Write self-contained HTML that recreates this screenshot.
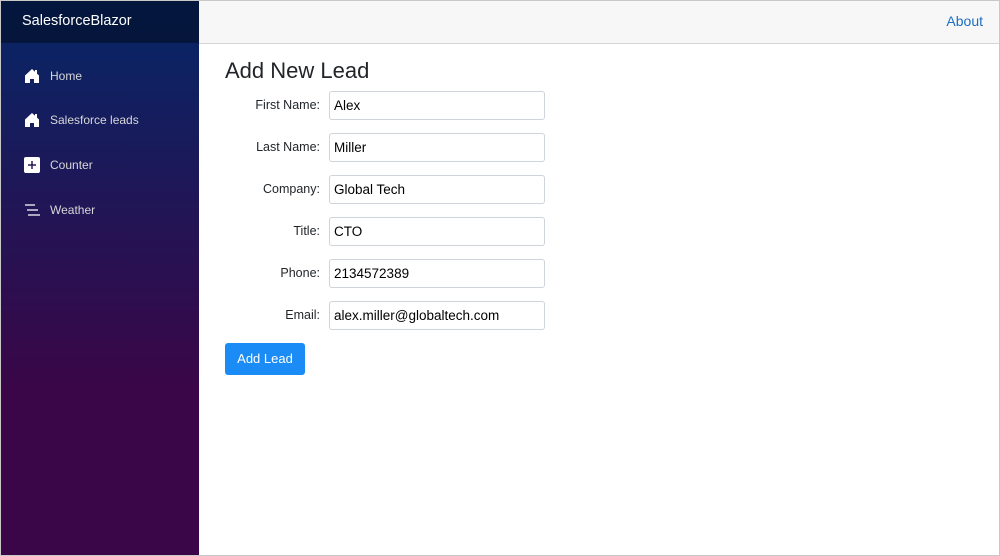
<!DOCTYPE html>
<html><head><style>
*{box-sizing:border-box;margin:0;padding:0}
body{width:1000px;height:556px;overflow:hidden;font-family:"Liberation Sans",Arial,sans-serif;background:#fff;position:relative}
.frame{position:absolute;inset:0;border:1px solid #c8c8c8;pointer-events:none;z-index:5}
.side{position:absolute;left:0;top:0;width:199px;height:556px;background:linear-gradient(180deg,#052767 0%,#3a0647 70%)}
.brand{height:43px;background:rgba(0,0,0,0.4);color:#fff;font-size:14.5px;line-height:43px;padding-left:22px}
.nav{position:absolute;left:24px;color:#d7d7d7;font-size:12px;display:flex;align-items:center}
.nav svg{margin-right:10px}
.top{position:absolute;left:199px;top:0;right:0;height:44px;background:#f7f7f7;border-bottom:1px solid #d6d5d5}
.top a{position:absolute;right:17px;top:13px;color:#1b6ec2;font-size:14px;text-decoration:none}
h1{position:absolute;left:225px;top:58px;font-size:22px;font-weight:normal;color:#212529}
.row{position:absolute;left:200px;width:400px;height:29px}
.row label{position:absolute;right:280px;top:7px;font-size:12.5px;color:#212529}
.row .in{position:absolute;left:129px;top:0;width:216px;height:29px;border:1px solid #ced4da;border-radius:3px;font-size:13.5px;padding:6px 0 0 4px;color:#000}
.btn{position:absolute;left:225px;top:343px;width:80px;height:32px;background:#1b8cf5;border-radius:3px;color:#fff;font-size:13px;text-align:center;line-height:31px}
</style></head><body>
<div class="side">
<div class="brand">SalesforceBlazor</div>
<div class="nav" style="top:68px"><svg width="16" height="16" viewBox="0 0 16 16"><path fill="#fff" d="M8 1 1 7.5V15h5v-4h4v4h5V7.5L13 5.6V2h-2v1.8z"/></svg>Home</div>
<div class="nav" style="top:112px"><svg width="16" height="16" viewBox="0 0 16 16"><path fill="#fff" d="M8 1 1 7.5V15h5v-4h4v4h5V7.5L13 5.6V2h-2v1.8z"/></svg>Salesforce leads</div>
<div class="nav" style="top:157px"><svg width="16" height="16" viewBox="0 0 16 16"><rect x="0" y="0" width="16" height="16" rx="2" fill="#fff"/><path d="M8 4v8M4 8h8" stroke="#2a1a5a" stroke-width="1.5"/></svg>Counter</div>
<div class="nav" style="top:202px"><svg width="16" height="16" viewBox="0 0 16 16"><path d="M1 3h10M3 8h11M4 13h12" stroke="#fff" stroke-width="1.2"/></svg>Weather</div>
</div>
<div class="top"><a>About</a></div>
<h1>Add New Lead</h1>
<div class="row" style="top:91px"><label>First Name:</label><div class="in">Alex</div></div>
<div class="row" style="top:133px"><label>Last Name:</label><div class="in">Miller</div></div>
<div class="row" style="top:175px"><label>Company:</label><div class="in">Global Tech</div></div>
<div class="row" style="top:217px"><label>Title:</label><div class="in">CTO</div></div>
<div class="row" style="top:259px"><label>Phone:</label><div class="in">2134572389</div></div>
<div class="row" style="top:301px"><label>Email:</label><div class="in">alex.miller@globaltech.com</div></div>
<div class="btn">Add Lead</div>
<div class="frame"></div>
</body></html>
